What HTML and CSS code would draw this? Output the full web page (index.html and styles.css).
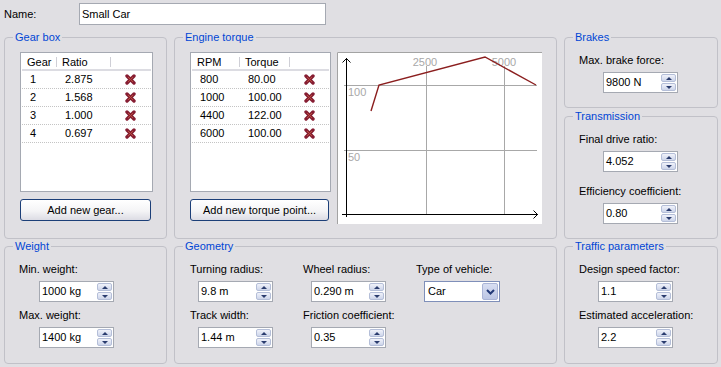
FILE: index.html
```html
<!DOCTYPE html>
<html lang="en">
<head>
    <meta charset="UTF-8">
    <meta name="viewport" content="width=device-width, initial-scale=1.0">
    <title>Vehicle type</title>
    <link rel="stylesheet" href="styles.css">
</head>
<body>
    <div class="name-row">
        <label class="name-label" for="nameInput">Name:</label>
        <input class="text-input" id="nameInput" value="Small Car">
    </div>

    <div class="panels">
        <fieldset class="group gearbox">
            <legend>Gear box</legend>
            <div class="list gear-list">
                <div class="list-head">
                    <span class="c1">Gear</span><span class="c2">Ratio</span><span class="c3"></span>
                </div>
                <div class="list-row"><span class="c1">1</span><span class="c2">2.875</span><span class="c3"><svg class="del" width="11" height="11" viewBox="0 0 11 11"><path d="M2 2 L9 9 M9 2 L2 9" stroke="#861d32" stroke-width="3.4" stroke-linecap="round"/><path d="M3 3 L8 8 M8 3 L3 8" stroke="#b8503c" stroke-width="1"/></svg></span></div>
                <div class="list-row"><span class="c1">2</span><span class="c2">1.568</span><span class="c3"><svg class="del" width="11" height="11" viewBox="0 0 11 11"><path d="M2 2 L9 9 M9 2 L2 9" stroke="#861d32" stroke-width="3.4" stroke-linecap="round"/><path d="M3 3 L8 8 M8 3 L3 8" stroke="#b8503c" stroke-width="1"/></svg></span></div>
                <div class="list-row"><span class="c1">3</span><span class="c2">1.000</span><span class="c3"><svg class="del" width="11" height="11" viewBox="0 0 11 11"><path d="M2 2 L9 9 M9 2 L2 9" stroke="#861d32" stroke-width="3.4" stroke-linecap="round"/><path d="M3 3 L8 8 M8 3 L3 8" stroke="#b8503c" stroke-width="1"/></svg></span></div>
                <div class="list-row"><span class="c1">4</span><span class="c2">0.697</span><span class="c3"><svg class="del" width="11" height="11" viewBox="0 0 11 11"><path d="M2 2 L9 9 M9 2 L2 9" stroke="#861d32" stroke-width="3.4" stroke-linecap="round"/><path d="M3 3 L8 8 M8 3 L3 8" stroke="#b8503c" stroke-width="1"/></svg></span></div>
            </div>
            <button class="btn gear-btn">Add new gear...</button>
        </fieldset>

        <fieldset class="group torque">
            <legend>Engine torque</legend>
            <div class="torque-body">
                <div class="torque-side">
                    <div class="list torque-list">
                        <div class="list-head">
                            <span class="c1">RPM</span><span class="c2">Torque</span><span class="c3"></span>
                        </div>
                        <div class="list-row"><span class="c1">800</span><span class="c2">80.00</span><span class="c3"><svg class="del" width="11" height="11" viewBox="0 0 11 11"><path d="M2 2 L9 9 M9 2 L2 9" stroke="#861d32" stroke-width="3.4" stroke-linecap="round"/><path d="M3 3 L8 8 M8 3 L3 8" stroke="#b8503c" stroke-width="1"/></svg></span></div>
                        <div class="list-row"><span class="c1">1000</span><span class="c2">100.00</span><span class="c3"><svg class="del" width="11" height="11" viewBox="0 0 11 11"><path d="M2 2 L9 9 M9 2 L2 9" stroke="#861d32" stroke-width="3.4" stroke-linecap="round"/><path d="M3 3 L8 8 M8 3 L3 8" stroke="#b8503c" stroke-width="1"/></svg></span></div>
                        <div class="list-row"><span class="c1">4400</span><span class="c2">122.00</span><span class="c3"><svg class="del" width="11" height="11" viewBox="0 0 11 11"><path d="M2 2 L9 9 M9 2 L2 9" stroke="#861d32" stroke-width="3.4" stroke-linecap="round"/><path d="M3 3 L8 8 M8 3 L3 8" stroke="#b8503c" stroke-width="1"/></svg></span></div>
                        <div class="list-row"><span class="c1">6000</span><span class="c2">100.00</span><span class="c3"><svg class="del" width="11" height="11" viewBox="0 0 11 11"><path d="M2 2 L9 9 M9 2 L2 9" stroke="#861d32" stroke-width="3.4" stroke-linecap="round"/><path d="M3 3 L8 8 M8 3 L3 8" stroke="#b8503c" stroke-width="1"/></svg></span></div>
                    </div>
                    <button class="btn torque-btn">Add new torque point...</button>
                </div>

                <svg class="chart" width="205" height="172" viewBox="0 0 205 172">
                    <rect x="0" y="0" width="205" height="172" fill="#fff"/>
                    <path d="M0.5 172 V0.5 H205" stroke="#a3a3a3" fill="none"/>
                    <path d="M7 33.5 H200 M7 98.5 H200 M89.5 14 V162 M167.5 14 V162" stroke="#a8a8a8" fill="none"/>
                    <g class="chart-labels">
                        <text x="88" y="14" text-anchor="middle">2500</text>
                        <text x="167" y="14" text-anchor="middle">5000</text>
                        <text x="11" y="44">100</text>
                        <text x="11" y="109">50</text>
                    </g>
                    <path d="M9.5 6 V165 M5 162.5 H201" stroke="#000" fill="none"/>
                    <path d="M5.5 10.5 L9.5 6.5 L13.5 10.5 M196.5 158.5 L200.5 162.5 L196.5 166.5" stroke="#000" fill="none"/>
                    <polyline points="34,59 42,33 148,5 199,33" stroke="#8b1e1e" stroke-width="1.4" fill="none"/>
                </svg>
            </div>
        </fieldset>

        <div class="side-stack">
            <fieldset class="group brakes">
                <legend>Brakes</legend>
                <div class="field">
                    <label>Max. brake force:</label>
                    <div class="spin"><span class="spin-value">9800 N</span><span class="spin-btns"><span class="spin-up"></span><span class="spin-down"></span></span></div>
                </div>
            </fieldset>

            <fieldset class="group transmission">
                <legend>Transmission</legend>
                <div class="field">
                    <label>Final drive ratio:</label>
                    <div class="spin"><span class="spin-value">4.052</span><span class="spin-btns"><span class="spin-up"></span><span class="spin-down"></span></span></div>
                </div>
                <div class="field">
                    <label>Efficiency coefficient:</label>
                    <div class="spin"><span class="spin-value">0.80</span><span class="spin-btns"><span class="spin-up"></span><span class="spin-down"></span></span></div>
                </div>
            </fieldset>
        </div>

        <fieldset class="group weight">
            <legend>Weight</legend>
            <div class="field">
                <label>Min. weight:</label>
                <div class="spin"><span class="spin-value">1000 kg</span><span class="spin-btns"><span class="spin-up"></span><span class="spin-down"></span></span></div>
            </div>
            <div class="field">
                <label>Max. weight:</label>
                <div class="spin"><span class="spin-value">1400 kg</span><span class="spin-btns"><span class="spin-up"></span><span class="spin-down"></span></span></div>
            </div>
        </fieldset>

        <fieldset class="group geometry">
            <legend>Geometry</legend>
            <div class="geo-grid">
                <div class="field">
                    <label>Turning radius:</label>
                    <div class="spin"><span class="spin-value">9.8 m</span><span class="spin-btns"><span class="spin-up"></span><span class="spin-down"></span></span></div>
                </div>
                <div class="field">
                    <label>Wheel radius:</label>
                    <div class="spin"><span class="spin-value">0.290 m</span><span class="spin-btns"><span class="spin-up"></span><span class="spin-down"></span></span></div>
                </div>
                <div class="field">
                    <label>Type of vehicle:</label>
                    <div class="combo"><span class="combo-value">Car</span><span class="combo-btn"><svg width="9" height="6" viewBox="0 0 9 6"><path d="M1 1 L4.5 4.5 L8 1" stroke="#233a78" stroke-width="2" fill="none"/></svg></span></div>
                </div>
                <div class="field">
                    <label>Track width:</label>
                    <div class="spin"><span class="spin-value">1.44 m</span><span class="spin-btns"><span class="spin-up"></span><span class="spin-down"></span></span></div>
                </div>
                <div class="field">
                    <label>Friction coefficient:</label>
                    <div class="spin"><span class="spin-value">0.35</span><span class="spin-btns"><span class="spin-up"></span><span class="spin-down"></span></span></div>
                </div>
            </div>
        </fieldset>

        <fieldset class="group traffic">
            <legend>Traffic parameters</legend>
            <div class="field">
                <label>Design speed factor:</label>
                <div class="spin"><span class="spin-value">1.1</span><span class="spin-btns"><span class="spin-up"></span><span class="spin-down"></span></span></div>
            </div>
            <div class="field">
                <label>Estimated acceleration:</label>
                <div class="spin"><span class="spin-value">2.2</span><span class="spin-btns"><span class="spin-up"></span><span class="spin-down"></span></span></div>
            </div>
        </fieldset>
    </div>
</body>
</html>
```

FILE: styles.css
```css
* {
    box-sizing: border-box;
}

body {
    margin: 0;
    padding: 3px 4px 0;
    background: #e0dfe3;
    font-family: "Liberation Sans", Arial, sans-serif;
    font-size: 11px;
    color: #000;
}

.name-row {
    display: flex;
    align-items: center;
    height: 22px;
}

.name-label {
    width: 75px;
}

.text-input {
    width: 247px;
    height: 22px;
    border: 1px solid #a5a9b2;
    background: #fff;
    padding: 0 2px;
    margin: 0;
    font: inherit;
    color: #000;
    outline: none;
}

.panels {
    display: grid;
    grid-template-columns: 163px 383px 154px;
    grid-template-rows: 208px 124px;
    column-gap: 7px;
    row-gap: 1px;
    margin-top: 6px;
}

.group {
    margin: 0;
    padding: 9px 14px 0;
    border: 1px solid #c1c1c8;
    border-radius: 4px;
    min-width: 0;
}

.group legend {
    padding: 0 2px;
    margin-left: -6px;
    line-height: 13px;
    color: #0046d5;
}

.gearbox,
.torque {
    padding-top: 8px;
}

/* list views */
.list {
    height: 140px;
    margin-left: 1px;
    border: 1px solid #a5a9b2;
    background: #fff;
    padding: 0 1px;
}

.gear-list {
    width: 133px;
}

.torque-list {
    width: 141px;
}

.list-head,
.list-row {
    display: flex;
}

.list-head {
    height: 18px;
    padding-top: 3px;
    line-height: 13px;
    border-bottom: 2px solid #dcdce2;
}

.list-head span {
    padding-left: 5px;
    background: linear-gradient(#cfcfd6, #cfcfd6) right 1px / 1px 10px no-repeat;
}

.list-head .c3 {
    background: none;
}

.list-row {
    height: 18px;
    line-height: 17px;
    border-bottom: 1px dotted #c4c4c4;
}

.list-row span {
    padding-left: 8px;
}

.gear-list .c1 { width: 35px; }
.gear-list .c2 { width: 54px; }
.torque-list .c1 { width: 48px; }
.torque-list .c2 { width: 50px; }

.list .c3 {
    flex: 1;
}

.list-row .c3 {
    padding-left: 14px;
}

.del {
    display: block;
    margin-top: 3px;
}

/* buttons */
.btn {
    display: block;
    height: 22px;
    margin: 7px 0 0 1px;
    padding: 0;
    border: 1px solid #1c3f78;
    border-radius: 3px;
    background: linear-gradient(#fff, #f4f4f6 55%, #dcdce4);
    font: inherit;
    color: #000;
}

.gear-btn {
    width: 131px;
}

.torque-btn {
    width: 139px;
}

.torque-body {
    display: flex;
    gap: 6px;
}

.chart {
    display: block;
}

.chart-labels {
    fill: #a8a8a8;
    font-family: "Liberation Sans", Arial, sans-serif;
    font-size: 11px;
}

/* right column */
.side-stack {
    display: flex;
    flex-direction: column;
    gap: 2px;
}

.brakes {
    padding-bottom: 14px;
}

.transmission {
    flex: 1;
    display: flex;
    flex-direction: column;
    gap: 12px;
}

/* fields */
.field label {
    display: block;
    line-height: 14px;
    margin-bottom: 5px;
    white-space: nowrap;
}

.weight,
.traffic {
    display: flex;
    flex-direction: column;
    gap: 6px;
}

.brakes .spin,
.transmission .spin {
    margin-left: 24px;
}

.weight .spin {
    margin-left: 20px;
}

.traffic .spin {
    margin-left: 19px;
}

.geo-grid {
    display: grid;
    grid-template-columns: 113px 113px 1fr;
    row-gap: 6px;
    margin-left: 1px;
}

.geo-grid .spin,
.geo-grid .combo {
    margin-left: 8px;
}

/* spin edit */
.spin {
    display: flex;
    width: 75px;
    height: 21px;
    border: 1px solid #a5a9b2;
    background: #fff;
}

.spin-value {
    flex: 1;
    padding-left: 2px;
    line-height: 19px;
}

.spin-btns {
    display: flex;
    flex-direction: column;
    gap: 1px;
    width: 15px;
    margin: 1px 1px 1px 0;
}

.spin-up,
.spin-down {
    flex: 1;
    display: flex;
    align-items: center;
    justify-content: center;
    border: 1px solid #b4bed8;
    border-radius: 2px;
    background: linear-gradient(#f0f2fa, #cdd5ea);
}

.spin-up::before,
.spin-down::before {
    content: "";
    border-left: 3px solid transparent;
    border-right: 3px solid transparent;
}

.spin-up::before {
    border-bottom: 3px solid #2a3c6e;
}

.spin-down::before {
    border-top: 3px solid #2a3c6e;
}

/* combo box */
.combo {
    display: flex;
    width: 76px;
    height: 21px;
    border: 1px solid #7f8fb9;
    background: #fff;
}

.combo-value {
    flex: 1;
    padding-left: 3px;
    line-height: 19px;
}

.combo-btn {
    display: flex;
    align-items: center;
    justify-content: center;
    width: 16px;
    margin: 1px 1px 1px 0;
    border: 1px solid #aab4d6;
    border-radius: 2px;
    background: linear-gradient(#d8def2, #bcc6e4);
}
```
